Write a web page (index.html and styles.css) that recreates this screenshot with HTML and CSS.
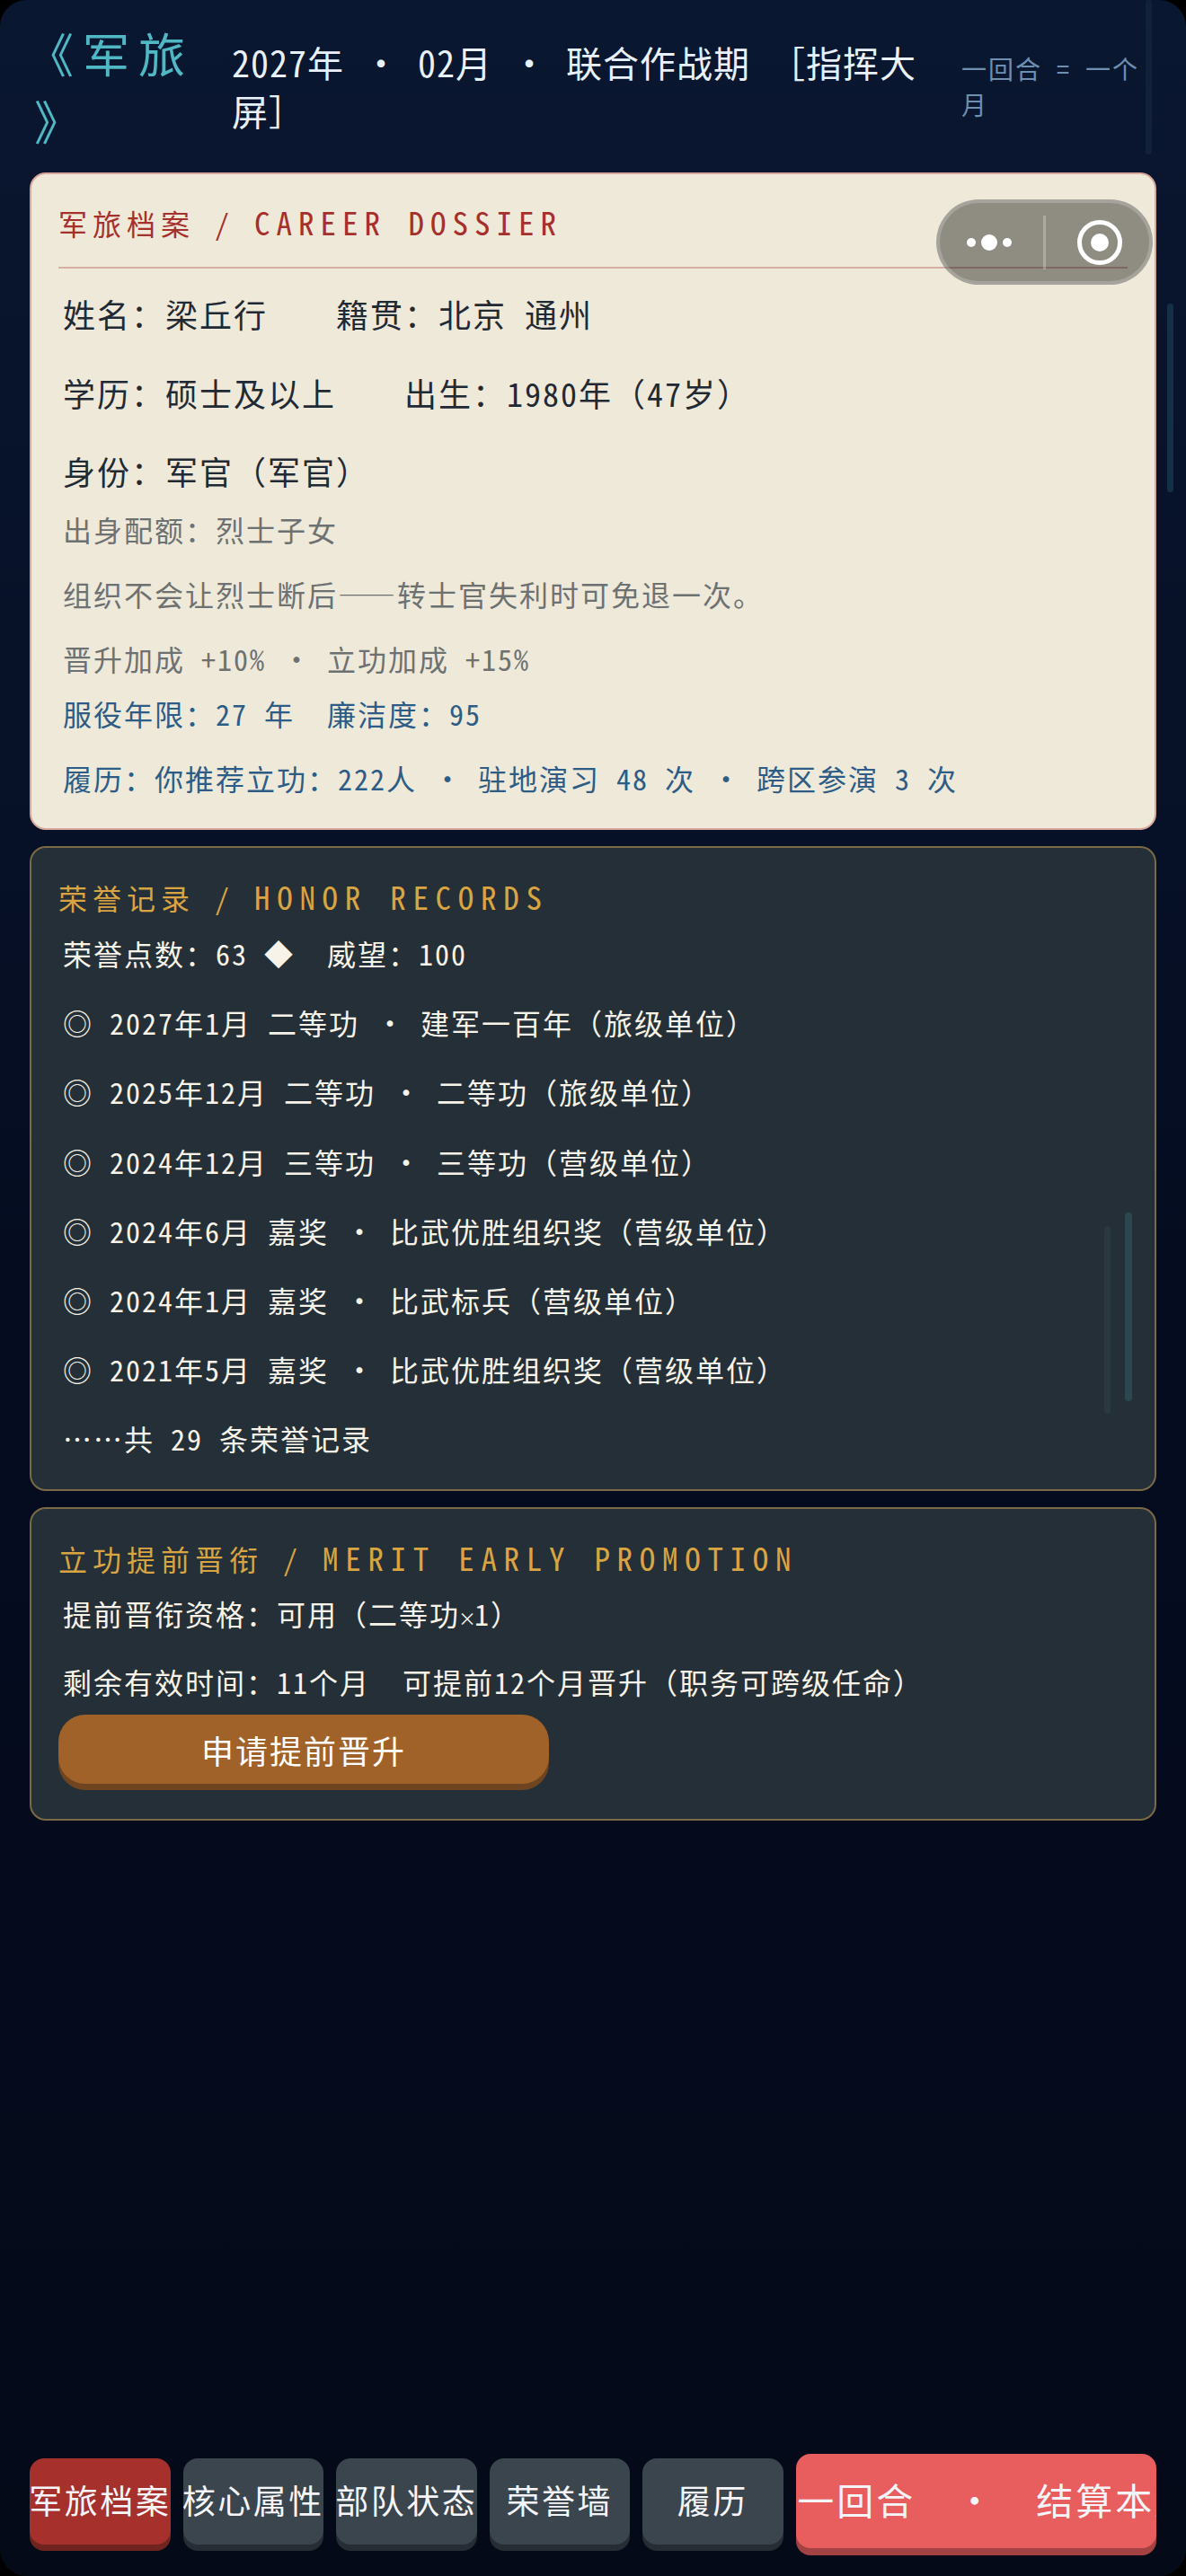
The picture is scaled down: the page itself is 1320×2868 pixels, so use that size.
FILE: index.html
```html
<!DOCTYPE html>
<html lang="zh-CN">
<head>
    <meta charset="UTF-8">
    <title>军旅</title>
    <link rel="stylesheet" href="styles.css">
</head>
<body>
<div class="screen">
    <header class="top">
        <div class="top-title"><span class="top-open">《军旅</span><br>》</div>
        <div class="top-date">2027年 <span class="dot">·</span> 02月 <span class="dot">·</span> 联合作战期 ［指挥大屏］</div>
        <div class="top-note">一回合 = 一个月</div>
    </header>

    <main class="content">
        <section class="card card-paper">
            <h2 class="card-title title-rule">军旅档案 / <span class="en">CAREER DOSSIER</span></h2>
            <div class="row-lg">姓名：梁丘行<span class="far">籍贯：北京 通州</span></div>
            <div class="row-lg">学历：硕士及以上<span class="far">出生：1980年（47岁）</span></div>
            <div class="row-lg">身份：军官（军官）</div>
            <div class="row muted first">出身配额：烈士子女</div>
            <div class="row muted">组织不会让烈士断后——转士官失利时可免退一次。</div>
            <div class="row muted">晋升加成 +10% <span class="dot">·</span> 立功加成 +15%</div>
            <div class="row blue tight">服役年限：27 年<span class="near">廉洁度：95</span></div>
            <div class="row blue">履历：你推荐立功：222人 <span class="dot">·</span> 驻地演习 48 次 <span class="dot">·</span> 跨区参演 3 次</div>
        </section>

        <section class="card card-dark honor">
            <h2 class="card-title gold">荣誉记录 / <span class="en">HONOR RECORDS</span></h2>
            <div class="row honor-head">荣誉点数：63 ◆<span class="near">威望：100</span></div>
            <div class="row">◎ 2027年1月 二等功 <span class="dot">·</span> 建军一百年（旅级单位）</div>
            <div class="row">◎ 2025年12月 二等功 <span class="dot">·</span> 二等功（旅级单位）</div>
            <div class="row">◎ 2024年12月 三等功 <span class="dot">·</span> 三等功（营级单位）</div>
            <div class="row">◎ 2024年6月 嘉奖 <span class="dot">·</span> 比武优胜组织奖（营级单位）</div>
            <div class="row">◎ 2024年1月 嘉奖 <span class="dot">·</span> 比武标兵（营级单位）</div>
            <div class="row">◎ 2021年5月 嘉奖 <span class="dot">·</span> 比武优胜组织奖（营级单位）</div>
            <div class="row">……共 29 条荣誉记录</div>
            <i class="bar bar-a"></i>
            <i class="bar bar-b"></i>
        </section>

        <section class="card card-dark merit">
            <h2 class="card-title gold">立功提前晋衔 / <span class="en">MERIT EARLY PROMOTION</span></h2>
            <div class="row merit-row">提前晋衔资格：可用（二等功<span class="times">×</span>1）</div>
            <div class="row merit-row">剩余有效时间：11个月<span class="near">可提前12个月晋升（职务可跨级任命）</span></div>
            <button class="apply">申请提前晋升</button>
        </section>
    </main>

    <nav class="tabs">
        <div class="tab active"><span>军旅档案</span></div>
        <div class="tab"><span>核心属性</span></div>
        <div class="tab"><span>部队状态</span></div>
        <div class="tab"><span>荣誉墙</span></div>
        <div class="tab"><span>履历</span></div>
        <div class="next"><span>下一回合<span class="next-dot">·</span>结算本月</span></div>
    </nav>

    <i class="bar bar-top"></i>
    <i class="bar bar-page"></i>

    <div class="capsule">
        <svg class="capsule-more" width="60" height="24" viewBox="0 0 60 24">
            <circle cx="10" cy="12" r="5" fill="#fff"/>
            <circle cx="30" cy="12" r="9" fill="#fff"/>
            <circle cx="50" cy="12" r="5" fill="#fff"/>
        </svg>
        <span class="capsule-line"></span>
        <svg class="capsule-close" width="50" height="50" viewBox="0 0 50 50">
            <circle cx="25" cy="25" r="22.5" fill="none" stroke="#fff" stroke-width="5"/>
            <circle cx="25" cy="25" r="10" fill="#fff"/>
        </svg>
    </div>
</div>
</body>
</html>
```

FILE: styles.css
```css
*{
    box-sizing: border-box;
}
html, body{
    margin: 0;
    padding: 0;
    background: #000;
}
body{
    width: 1320px;
    height: 2868px;
    overflow: hidden;
    font-family: "Noto Sans Mono CJK SC", "Noto Sans CJK SC", "Liberation Mono", monospace;
}
.screen{
    position: relative;
    width: 1320px;
    height: 2868px;
    border-radius: 30px;
    overflow: hidden;
    display: flex;
    flex-direction: column;
    background: linear-gradient(180deg, #0a1730 0, #071229 25%, #050c20 50%, #050a19 100%);
}
.dot{
    display: inline-block;
    width: 1em;
    text-align: center;
}

/* header */
.top{
    height: 192px;
    flex: none;
    display: flex;
    align-items: center;
    padding: 0 0 0 38px;
}
.top-title{
    width: 220px;
    flex: none;
    font-size: 52px;
    line-height: 75px;
    letter-spacing: 10px;
    color: #4fb8c4;
}
.top-open{
    margin-left: -8px;
}
.top-date{
    width: 812px;
    flex: none;
    padding-right: 20px;
    font-size: 40px;
    line-height: 54px;
    letter-spacing: 1px;
    color: #e8f0fa;
}
.top-note{
    width: 205px;
    flex: none;
    font-size: 28px;
    line-height: 40px;
    letter-spacing: 2px;
    color: #6f8fb0;
}

/* cards */
.content{
    flex: 1;
    padding: 0 33px;
}
.card{
    border-radius: 18px;
    padding: 0 30px;
}
.card-paper{
    height: 732px;
    padding-top: 30px;
    background: #efe9d9;
    border: 2px solid #d9a79c;
    color: #1f2a35;
}
.card-dark{
    position: relative;
    margin-top: 18px;
    background: #242f37;
    border: 2px solid #7a6a45;
    color: #f7f3e8;
}
.card-title{
    margin: 0;
    font-size: 32px;
    font-weight: 400;
    line-height: 46px;
    letter-spacing: 6px;
    color: #a5302c;
}
.card-title .en{
    font-size: 35px;
    letter-spacing: 7px;
}
.title-rule{
    height: 75px;
    border-bottom: 2px solid #d6aea3;
    margin-bottom: 24px;
}
.gold{
    color: #d9a441;
}
.gold .en{
    letter-spacing: 7.7px;
}
.row-lg{
    font-size: 36px;
    line-height: 52px;
    letter-spacing: 2px;
    padding-left: 5px;
    margin-bottom: 35.5px;
}
.row{
    font-size: 32px;
    line-height: 46px;
    letter-spacing: 2px;
    padding-left: 5px;
    margin-bottom: 26px;
}
.row.first{
    margin-top: -20px;
}
.muted{
    color: #6d7172;
}
.blue{
    color: #2d5c86;
}
.row.muted:nth-of-type(6){
    margin-bottom: 15px;
}
.far{
    margin-left: 76px;
}
.near{
    margin-left: 36px;
}
.times{
    font-size: 20px;
    letter-spacing: 0;
    margin: 0 -2px;
}

.honor{
    height: 718px;
    padding-top: 31px;
}
.honor .row{
    margin-bottom: 31.2px;
}
.honor .card-title{
    margin-bottom: 16px;
}

.merit{
    height: 349px;
    padding-top: 31px;
}
.merit .card-title{
    margin-bottom: 15px;
}
.merit .merit-row{
    margin-bottom: 24px;
}
.apply{
    display: block;
    width: 546px;
    height: 77px;
    margin: -10px 0 0 0;
    padding: 0;
    border: none;
    border-radius: 30px;
    background: #a06228;
    box-shadow: 0 7px 0 #6e4520;
    color: #fff;
    font-family: inherit;
    font-size: 36px;
    letter-spacing: 2px;
}

/* bottom tabs */
.tabs{
    flex: none;
    display: grid;
    grid-template-columns: repeat(5, 156.5px) 1fr;
    column-gap: 14px;
    align-items: start;
    padding: 0 33px 31px;
}
.tab, .next{
    display: flex;
    align-items: center;
    justify-content: center;
    white-space: nowrap;
    color: #f5f5fa;
    padding-bottom: 5px;
}
.tab{
    height: 96px;
    margin-top: 5px;
    border-radius: 16px;
    background: #3a454e;
    box-shadow: 0 7px 0 #262d34;
    font-size: 37px;
    letter-spacing: 2.5px;
}
.tab.active{
    background: #a5302c;
    box-shadow: 0 7px 0 #70241f;
}
.next{
    height: 105px;
    border-radius: 16px;
    background: #e85d5d;
    box-shadow: 0 8px 0 #a34242;
    overflow: hidden;
    font-size: 41px;
    letter-spacing: 3px;
}
.next-dot{
    display: inline-block;
    width: 44px;
    margin: 0 45px;
    text-align: center;
}

/* faint scroll bars and the capsule lie over the page */
.bar{
    position: absolute;
    display: block;
    border-radius: 4px;
}
.bar-top{
    left: 1275px;
    top: 0;
    width: 7px;
    height: 172px;
    background: #10223a;
}
.bar-page{
    left: 1299px;
    top: 338px;
    width: 7px;
    height: 210px;
    background: #123046;
}
.bar-a{
    left: 1217px;
    top: 406px;
    width: 8px;
    height: 210px;
    background: #2c4750;
}
.bar-b{
    left: 1194px;
    top: 421px;
    width: 7px;
    height: 209px;
    background: #28393f;
}
.capsule{
    position: absolute;
    left: 1042px;
    top: 222px;
    width: 241px;
    height: 95px;
    display: flex;
    align-items: center;
    border: 4px solid rgba(255, 255, 255, 0.2);
    border-radius: 48px;
    background: rgba(0, 0, 0, 0.4);
}
.capsule-more{
    margin-left: 25px;
    flex: none;
}
.capsule-line{
    width: 3px;
    height: 60px;
    margin-left: 30px;
    flex: none;
    background: rgba(255, 255, 255, 0.25);
}
.capsule-close{
    margin-left: 35px;
    flex: none;
}
```
